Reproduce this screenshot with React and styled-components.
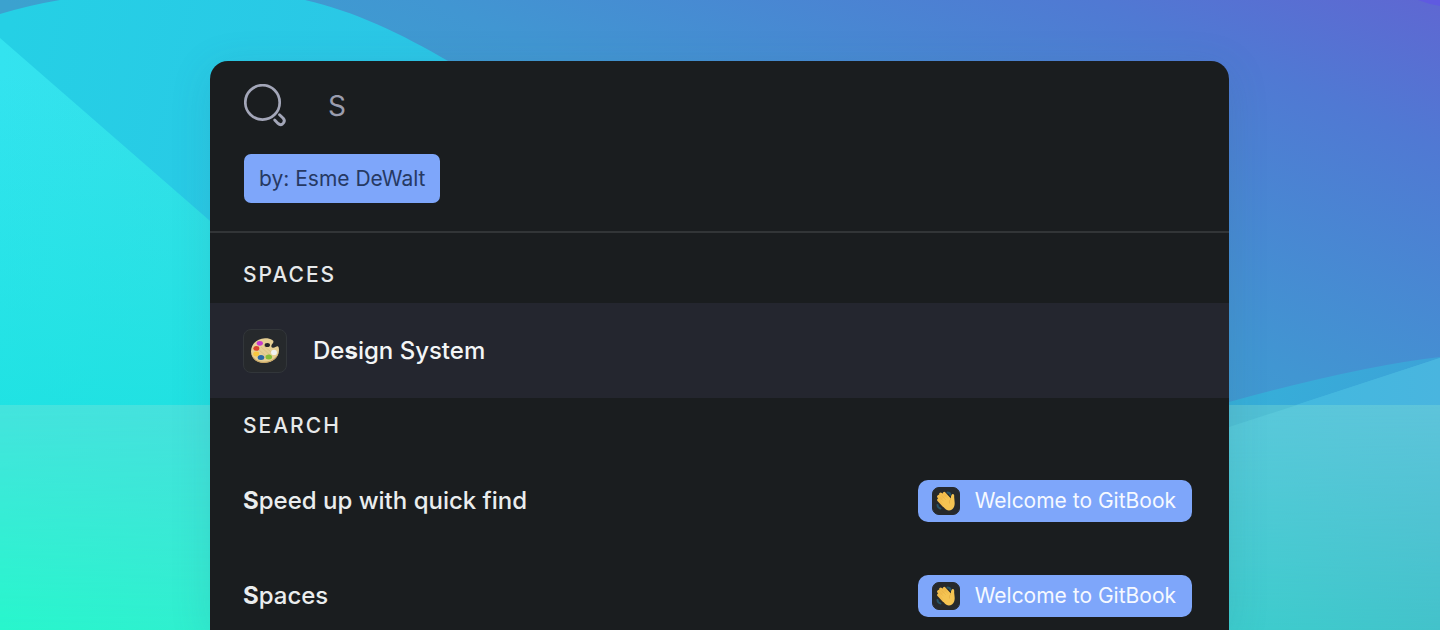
import React from "react";
import styled, { createGlobalStyle } from "styled-components";

const GlobalStyle = createGlobalStyle`
  *, *::before, *::after { box-sizing: border-box; }
  body {
    margin: 0;
    font-family: Inter, "Liberation Sans", sans-serif;
    -webkit-font-smoothing: antialiased;
  }
  h2, ul { margin: 0; padding: 0; }
`;

const Stage = styled.main`
  position: relative;
  display: flex;
  min-height: 100vh;
  padding: 61px 211px 0 210px;
  overflow: hidden;

  @media (max-width: 1100px) {
    padding: 40px 24px 0;
  }
`;

const Backdrop = styled.svg`
  position: absolute;
  inset: 0;
  width: 100%;
  height: 100%;
`;

const Panel = styled.div`
  position: relative;
  flex: 1;
  min-width: 0;
  border-radius: 18px 18px 0 0;
  background: #1a1d1f;
  box-shadow: 0 8px 40px rgba(50, 100, 130, 0.16);
`;

const Header = styled.header`
  display: flex;
  flex-direction: column;
  align-items: flex-start;
  gap: 26px;
  padding: 23px 34px 28px;
  border-bottom: 2px solid #323537;
`;

const SearchField = styled.label`
  display: flex;
  align-items: center;
  gap: 40px;
  width: 100%;
`;

const SearchIcon = styled.svg`
  flex: none;
  width: 44px;
  height: 44px;
`;

const SearchInput = styled.input`
  flex: 1;
  min-width: 0;
  height: 44px;
  padding: 0;
  border: 0;
  outline: 0;
  background: transparent;
  color: #9b9dae;
  font: 400 28px/44px Inter, "Liberation Sans", sans-serif;
`;

const FilterChip = styled.button`
  height: 49px;
  padding: 0 15px;
  border: 0;
  border-radius: 7px;
  background: #7ea6fa;
  color: #263963;
  font: 400 21px/48px Inter, "Liberation Sans", sans-serif;
  cursor: pointer;
`;

const SectionTitle = styled.h2`
  padding: ${(p) => (p.$first ? 28 : 14)}px 33px 14px;
  color: #e6e9ea;
  font-size: 21px;
  font-weight: 500;
  line-height: 28px;
  letter-spacing: 2px;
  text-transform: uppercase;
`;

const SpaceRow = styled.a`
  display: flex;
  align-items: center;
  gap: 26px;
  height: 95px;
  padding: 0 33px;
  background: #24262f;
  color: #f3f5f6;
  font-size: 24px;
  font-weight: 500;
  line-height: 32px;
  text-decoration: none;
`;

const Tile = styled.span`
  display: flex;
  flex: none;
  align-items: center;
  justify-content: center;
  width: ${(p) => p.$size}px;
  height: ${(p) => p.$size}px;
  border: 1px solid ${(p) => p.$edge};
  border-radius: ${(p) => p.$radius}px;
  background: #26292c;
`;

const ResultList = styled.ul`
  display: flex;
  flex-direction: column;
  gap: 53px;
  padding: 26px 37px 13px 33px;
  list-style: none;
`;

const ResultLink = styled.a`
  display: flex;
  align-items: center;
  justify-content: space-between;
  gap: 24px;
  color: #eaedee;
  font-size: 24px;
  font-weight: 500;
  line-height: 32px;
  text-decoration: none;
`;

const Match = styled.b`
  font-weight: 700;
`;

const SpacePill = styled.span`
  display: flex;
  flex: none;
  align-items: center;
  gap: 15px;
  height: 42px;
  padding: 0 16px 0 14px;
  border-radius: 10px;
  background: #7ea6fa;
  color: #f6f9ff;
  font-size: 21px;
  font-weight: 400;
  line-height: 28px;
`;

function Waves() {
  return (
    <Backdrop viewBox="0 0 1440 630" preserveAspectRatio="none" aria-hidden="true">
      <defs>
        <linearGradient id="sky" gradientUnits="userSpaceOnUse" x1="0" y1="0" x2="229" y2="-527">
          <stop offset="0" stopColor="#3ba2cf" />
          <stop offset="0.3" stopColor="#4196d2" />
          <stop offset="0.76" stopColor="#5079d3" />
          <stop offset="1" stopColor="#5f67d2" />
        </linearGradient>
        <linearGradient id="disc" gradientUnits="userSpaceOnUse" x1="0" y1="60" x2="1440" y2="400">
          <stop offset="0" stopColor="#25d0e5" />
          <stop offset="0.3" stopColor="#2cc5e6" />
          <stop offset="0.84" stopColor="#34b2d9" />
          <stop offset="1" stopColor="#3da2d8" />
        </linearGradient>
        <linearGradient id="tide" gradientUnits="userSpaceOnUse" x1="0" y1="0" x2="1440" y2="0">
          <stop offset="0" stopColor="#33e3ef" />
          <stop offset="0.15" stopColor="#37dee9" />
          <stop offset="0.85" stopColor="#40bbdf" />
          <stop offset="1" stopColor="#49b5df" />
        </linearGradient>
        <linearGradient id="tideDepth" x1="0" y1="0" x2="0" y2="1">
          <stop offset="0.1" stopColor="#18e6da" stopOpacity="0" />
          <stop offset="1" stopColor="#18e2de" stopOpacity="0.7" />
        </linearGradient>
        <linearGradient id="shoreTop" x1="0" y1="0" x2="1" y2="0">
          <stop offset="0" stopColor="#44e4de" />
          <stop offset="0.14" stopColor="#46e1de" />
          <stop offset="0.86" stopColor="#5ac9db" />
          <stop offset="1" stopColor="#5ec4db" />
        </linearGradient>
        <linearGradient id="shoreBottom" x1="0" y1="0" x2="1" y2="0">
          <stop offset="0" stopColor="#28f6cc" />
          <stop offset="0.14" stopColor="#30efcf" />
          <stop offset="0.86" stopColor="#3dcdcd" />
          <stop offset="1" stopColor="#43c2ca" />
        </linearGradient>
        <linearGradient id="fade" x1="0" y1="0" x2="0" y2="1">
          <stop offset="0" stopColor="#000" />
          <stop offset="1" stopColor="#fff" />
        </linearGradient>
        <mask id="shoreMask">
          <rect y="405" width="1440" height="225" fill="url(#fade)" />
        </mask>
      </defs>
      <rect width="1440" height="630" fill="url(#sky)" />
      <path d="M1418 0 Q1428 4 1440 6 V0Z" fill="#5f5ae0" />
      <path
        d="M0 14 Q30 5 60 0 H305 C354 11 402 34 448 61 L760 300 L1229 402 Q1360 366 1440 357 V630 H0Z"
        fill="url(#disc)"
      />
      <path d="M0 38 L210 221 L600 500 L1229 427 L1440 358 V405 H0Z" fill="url(#tide)" />
      <path d="M1297 405 L1440 358 V405Z" fill="url(#tide)" />
      <path d="M0 38 L210 221 V405 H0Z" fill="url(#tideDepth)" />
      <rect y="405" width="1440" height="225" fill="url(#shoreTop)" />
      <path d="M1229 405 H1297 L1229 427Z" fill="#52bfd5" />
      <rect y="405" width="1440" height="225" fill="url(#shoreBottom)" mask="url(#shoreMask)" />
    </Backdrop>
  );
}

function Palette() {
  return (
    <svg width="30" height="28" viewBox="0 0 30 28" aria-hidden="true">
      <path
        d="M15 1.200C7 1.500 1 7 1 14.500 1 21.500 7 26 14 25.900 22.500 25.800 29 20.500 29 13 29 11 28.600 9.500 27.800 9.200 25.800 9.300 25 11 22.800 10.800 20.500 10.200 21.300 8 22.700 6.600 23.800 5.300 23.800 4 22.300 3 20.300 1.600 17.800 1.100 15 1.200Z"
        fill="#e6cf94"
      />
      <path d="M1.200 15.500C2.500 21 8 25 14 24.800 21.500 24.700 27 20.500 28.700 14.500 28 21.500 21.500 25.800 14 25.900 7 26 1.700 21.500 1.200 15.500Z" fill="#c9a765" />
      <path d="M11 10l9 8M14 9l7 6M9 13l7 6" stroke="#dcc288" strokeWidth="1" />
      <ellipse cx="17.300" cy="8" rx="2.700" ry="2.100" fill="#26262a" />
      <ellipse cx="9.800" cy="6.300" rx="3.100" ry="2.400" fill="#c93bcd" />
      <ellipse cx="6.300" cy="11.400" rx="3" ry="2.300" fill="#d8432d" />
      <ellipse cx="6.200" cy="17" rx="3" ry="2.400" fill="#f7c740" />
      <ellipse cx="11" cy="20.600" rx="3.300" ry="2.500" fill="#2c69a4" />
      <ellipse cx="18.800" cy="20" rx="3.300" ry="2.500" fill="#86bd37" />
      <ellipse cx="24" cy="15.400" rx="2.900" ry="2.600" fill="#f0f2f1" />
    </svg>
  );
}

function WavingHand() {
  return (
    <svg width="20" height="22" viewBox="0 0 20 22" aria-hidden="true">
      <g fill="none" stroke="#285467" strokeWidth="2" strokeLinecap="round">
        <path d="M11.500 2.500Q14 2.500 14.500 5M1.500 15Q1.800 18 4.500 18.500" />
      </g>
      <g stroke="#f2bd4d" strokeWidth="3.300" strokeLinecap="round">
        <path d="M2.700 9.900L8 15.500M2.700 6.600L10 14M4.700 4.200L12 11.500M8.200 3.600L14 10" />
      </g>
      <path
        d="M5 10L11.500 5.500 14.800 9C14.900 7.500 14.800 5.300 16.200 4.300c1.200-.7 2.100.4 2 1.800-.2 2.300.5 4.700.5 7.200 0 2.400-.8 4.700-2.700 6.100-2.700 1.900-5.700 1-7.700-1.300Z"
        fill="#f5c452"
      />
      <path d="M4.400 7.800L7.300 11M6 5.800L9.500 9.500M8.800 5L11.700 8.200" stroke="#e3ae46" strokeWidth="0.500" strokeLinecap="round" />
      <path d="M14.800 9Q12.700 10.500 13.500 13.500" fill="none" stroke="#e0a840" strokeWidth="0.600" />
    </svg>
  );
}

function Result({ initial, rest }) {
  return (
    <li>
      <ResultLink href="#">
        <span>
          <Match>{initial}</Match>
          {rest}
        </span>
        <SpacePill>
          <Tile $size={28} $radius={7} $edge="#26292c">
            <WavingHand />
          </Tile>
          Welcome to GitBook
        </SpacePill>
      </ResultLink>
    </li>
  );
}

export default function App() {
  return (
    <>
      <GlobalStyle />
      <Stage>
        <Waves />
        <Panel>
          <Header>
            <SearchField htmlFor="quick-find">
              <SearchIcon viewBox="0 0 44 44" fill="none" stroke="#a3a6b8" strokeWidth="2.700" strokeLinecap="round" aria-hidden="true">
                <circle cx="18.500" cy="18.400" r="17.200" />
                <path d="M35.500 30.800L39.200 34.300Q41.400 36.800 39.400 39L38.600 39.800Q36.400 41.700 34 39.400L30.700 36" strokeWidth="2.900" />
              </SearchIcon>
              <SearchInput id="quick-find" type="text" aria-label="Search" defaultValue="S" />
            </SearchField>
            <FilterChip type="button">by: Esme DeWalt</FilterChip>
          </Header>
          <section>
            <SectionTitle $first>Spaces</SectionTitle>
            <SpaceRow href="#">
              <Tile $size={44} $radius={8} $edge="#32363a">
                <Palette />
              </Tile>
              <span>
                De<Match>s</Match>ign System
              </span>
            </SpaceRow>
          </section>
          <section>
            <SectionTitle>Search</SectionTitle>
            <ResultList>
              <Result initial="S" rest="peed up with quick find" />
              <Result initial="S" rest="paces" />
            </ResultList>
          </section>
        </Panel>
      </Stage>
    </>
  );
}
